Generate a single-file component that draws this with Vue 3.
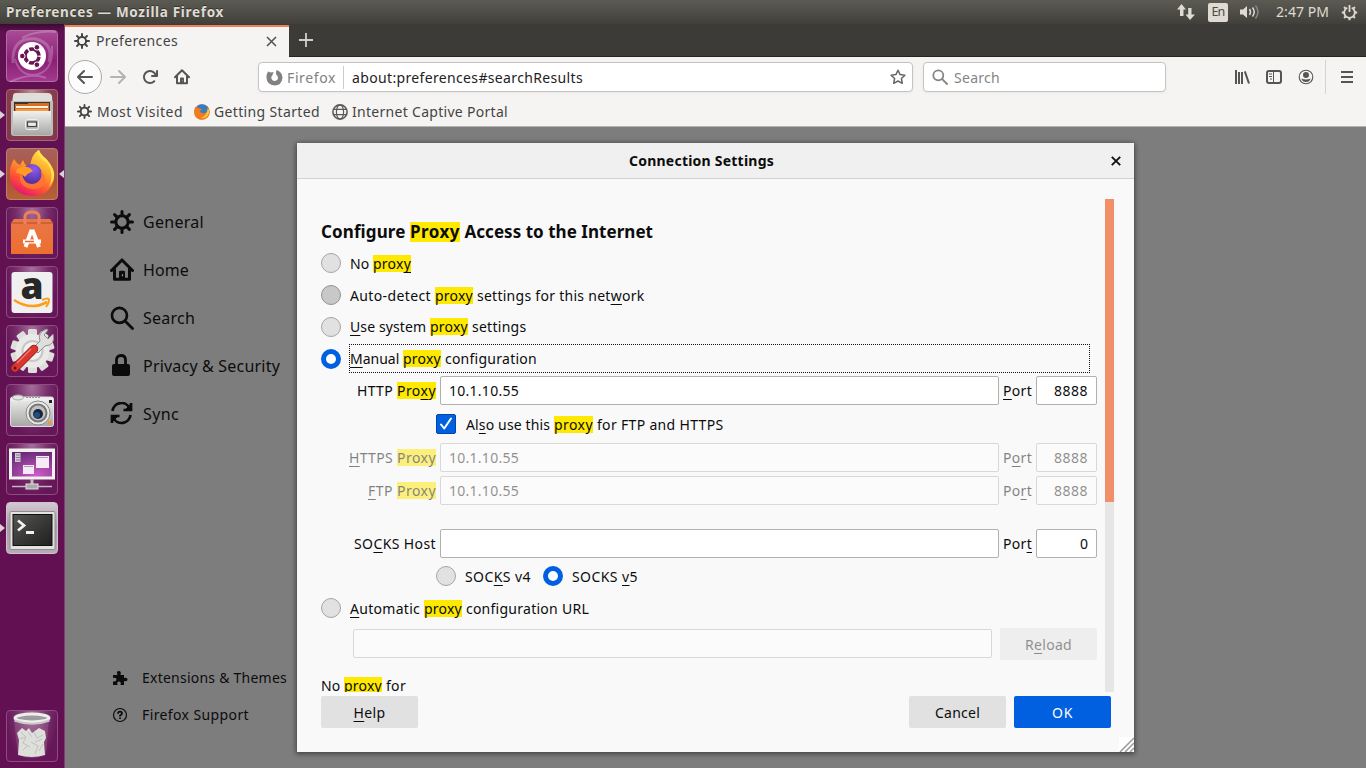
<script setup>
// v-fit: adjusts letter spacing so a label takes the given width in pixels
const vFit = {
  mounted(el, { value }) {
    const natural = el.getBoundingClientRect().width
    el.style.letterSpacing = (value - natural) / el.textContent.length + 'px'
  },
}
const spokes = [0, 45, 90, 135, 180, 225, 270, 315]
const teeth = [0, 36, 72, 108, 144, 180, 216, 252, 288, 324]
</script>

<template>
  <div class="screen">
    <svg class="defs" width="0" height="0">
      <defs>
        <symbol id="gear" viewBox="0 0 16 16">
          <circle cx="8" cy="8" r="4.1" fill="none" stroke="currentColor" stroke-width="2" />
          <path v-for="a in spokes" :key="a" d="M8 3.6V1" :transform="`rotate(${a} 8 8)`" stroke="currentColor" stroke-width="2" stroke-linecap="round" />
        </symbol>
        <symbol id="home" viewBox="0 0 16 16">
          <path d="M1 8.3 8 1.3l7 7M3 7v7.2h10V7" fill="none" stroke="currentColor" stroke-width="2" stroke-linecap="round" stroke-linejoin="round" />
          <path d="M6 14V9.400Q6 8.500 7 8.500H9Q10 8.500 10 9.400V14Z" fill="currentColor" /><path d="M8.300 10.800v1.400" stroke="#999" stroke-width=".8" />
        </symbol>
        <symbol id="lens" viewBox="0 0 16 16">
          <circle cx="6.3" cy="6.3" r="5" fill="none" stroke="currentColor" stroke-width="1.8" />
          <path d="m10.2 10.2 4.8 4.8" stroke="currentColor" stroke-width="1.9" stroke-linecap="round" />
        </symbol>
        <symbol id="arrow" viewBox="0 0 16 16">
          <path fill="currentColor" d="M15 7H3.414l4.293-4.293a1 1 0 0 0-1.414-1.414l-6 6a1 1 0 0 0 0 1.414l6 6a1 1 0 0 0 1.414-1.414L3.414 9H15a1 1 0 0 0 0-2z" />
        </symbol>
        <linearGradient id="metal" x1="0" y1="0" x2="0" y2="1"><stop offset="0" stop-color="#f1f1f0" /><stop offset="1" stop-color="#a6a6a5" /></linearGradient>
        <linearGradient id="flame" x1=".8" y1="0" x2=".3" y2="1"><stop offset="0" stop-color="#fff04a" /><stop offset=".4" stop-color="#ffa22a" /><stop offset=".75" stop-color="#ff4b37" /><stop offset="1" stop-color="#e3117a" /></linearGradient>
        <radialGradient id="globe" cx=".6" cy=".25" r=".8"><stop offset="0" stop-color="#8e5cf0" /><stop offset="1" stop-color="#4c2a9a" /></radialGradient>
        <linearGradient id="bag" x1="0" y1="0" x2="0" y2="1"><stop offset="0" stop-color="#e8764a" /><stop offset="1" stop-color="#ee6f2e" /></linearGradient>
        <radialGradient id="desk" cx=".6" cy=".9" r="1"><stop offset="0" stop-color="#d05cc8" /><stop offset="1" stop-color="#57246a" /></radialGradient>
        <linearGradient id="term" x1="0" y1="0" x2="1" y2="1"><stop offset="0" stop-color="#555652" /><stop offset="1" stop-color="#1e1f1e" /></linearGradient>
      </defs>
    </svg>

    <header class="panel">
      <b v-fit="218">Preferences — Mozilla Firefox</b>
      <div class="tray">
        <svg class="net" width="18" height="16" viewBox="0 0 18 16" fill="#dfdbd2"><path d="M0 5.5 4.5 0 9 5.5H6.5V12H3V5.5ZM8.5 10.5h2.7V4h3.3v6.5H18L13 16Z" /></svg>
        <span class="lang"><span v-fit="13">En</span></span>
        <svg class="vol" width="20" height="16" viewBox="0 0 20 16"><path d="M0 5.5h3L7 2v12l-4-3.500H0Z" fill="#dfdbd2" /><path d="M9.5 5Q11.500 8 9.500 11M12.500 3.500Q16 8 12.500 12.500" stroke="#dfdbd2" stroke-width="1.5" fill="none" /><path d="M15.500 1.500Q20.500 8 15.500 14.500" stroke="#88867e" stroke-width="1.600" fill="none" /></svg>
        <span class="clock" v-fit="53">2:47 PM</span>
        <svg class="power" width="17" height="17" viewBox="0 0 17 17" fill="none" stroke="#dfdbd2"><path d="M6.300 3.700A5.300 5.300 0 1 0 10.700 3.700" stroke-width="1.800" /><path d="M8.500 1v7" stroke-width="1.800" /><g stroke-width="2"><path v-for="a in spokes.slice(1)" :key="a" d="M8.500 3V.8" :transform="`rotate(${a} 8.500 8.500)`" /></g></svg>
      </div>
    </header>

    <div class="work">
      <aside class="launcher">
        <div class="tile dash"><svg viewBox="0 0 52 52">
          <g fill="none" stroke="#fff" opacity=".22"><path d="M7 33Q5 7 30 9Q48 14 43 32" stroke-width="3" /><path d="M46 16Q48 44 26 45Q13 44 9 29" stroke-width="2" /><path d="M4 52Q25 42 40 48M16 8Q31 0 50 2" stroke-width="2" /></g>
          <circle cx="26" cy="26" r="14" fill="#fff" />
          <circle cx="26" cy="26" r="7" fill="none" stroke="#6a1452" stroke-width="3.600" stroke-dasharray="13.160 1.500" stroke-dashoffset="-.75" />
          <g fill="#6a1452" stroke="#fff"><circle cx="16.300" cy="26" r="2.800" /><circle cx="30.900" cy="17.300" r="2.800" /><circle cx="30.900" cy="34.700" r="2.800" /></g>
        </svg></div>
        <div class="tile files"><i class="run"></i><svg viewBox="0 0 52 52">
          <path d="M7 7Q7 4 10 4H42Q45 4 46 7L47 21H5Z" fill="#dededd" /><path d="M5 12H47V44Q47 47 44 47H8Q5 47 5 44Z" fill="#bcbcbb" />
          <path d="M8 13H44V22H8Z" fill="#383634" /><path d="M9 15H22V14H43V22H9Z" fill="#d96e20" /><path d="M10 17H42V19H10Z" fill="#fff4df" /><path d="M10 20H42V22H10Z" fill="#f49b45" />
          <path d="M7 22H45V45Q45 46 43 46H9Q7 46 7 45Z" fill="url(#metal)" /><rect x="19.500" y="30.500" width="13" height="10" rx="2" fill="#bcbcba" stroke="#efefed" /><rect x="21.500" y="33" width="9" height="4.500" fill="#ececea" stroke="#454545" stroke-width="1.200" />
        </svg></div>
        <div class="tile fox"><i class="run"></i><i class="active"></i><svg viewBox="0 0 52 52">
          <path d="M8 11Q10 15 14 17L17 12Q19 18 24 20Q25 6 33 2Q33 8 41 12Q50 22 48 31C46 42 37 48 27 48C13 48 4 39 4 27Q3 19 8 11Z" fill="url(#flame)" />
          <path d="M31 3Q33 10 41 15Q49 26 43 39Q49 31 48 25Q45 14 37 8Q34 5 33 2Z" fill="#ffe34e" />
          <circle cx="26" cy="26" r="10" fill="url(#globe)" /><path d="M11 21Q18 17 24 20L27 23Q22 25 19 29Q15 25 10 25Z" fill="#ff9b24" /><path d="M16 26Q18 38 29 36Q37 33 35 23Q43 32 35 39Q26 44 18 38Q13 34 14 28Z" fill="#ff7431" />
        </svg></div>
        <div class="tile"><svg viewBox="0 0 52 52">
          <path d="M5 16 8 12H44L47 16V47H5Z" fill="url(#bag)" /><path d="M5 16H47" stroke="#b65024" /><path d="M19 17V9Q20 5 26 5T33 9V17" fill="none" stroke="#ed8159" stroke-width="3" />
          <g fill="none" stroke="#fff" stroke-width="4"><path d="M19.500 40 25 24.500H27L33 40" /><path d="M17 34.500H35" /></g><path d="M19 34.500H28" stroke="#e9652a" stroke-width="1.500" />
        </svg></div>
        <div class="tile"><svg viewBox="0 0 52 52">
          <rect x="5.500" y="6" width="41" height="41" rx="3" fill="#f1f0f0" />
          <text x="26" y="33" text-anchor="middle" class="amazon">a</text>
          <path d="M8 34Q25 45 41 36" fill="none" stroke="#ff9e16" stroke-width="2.600" /><path d="M36 34Q43 31 43 34T40 41" fill="none" stroke="#ff9e16" stroke-width="2" />
        </svg></div>
        <div class="tile"><svg viewBox="0 0 52 52">
          <g fill="#dededd"><rect v-for="a in teeth" :key="a" x="22" y="4" width="9" height="9" rx="1.500" :transform="`rotate(${a} 26.500 26)`" /></g><circle cx="26.500" cy="26" r="17" fill="#e9e9e8" /><circle cx="26.500" cy="26" r="11" fill="#c9c5c8" /><circle cx="26.500" cy="26" r="9" fill="#f1f1f0" />
          <path d="M27 23 34 16Q31 7 41 4L42 5 38 10 42 14 47 9Q50 20 39 21L32 28Z" fill="#dededd" stroke="#8f8f8d" /><path d="M9 43 28 24" stroke="#8f1515" stroke-width="8.500" stroke-linecap="round" /><path d="M9 43 28 24" stroke="#d93630" stroke-width="7" stroke-linecap="round" /><path d="M11 38 25 24" stroke="#ef8075" stroke-width="1.200" /><circle cx="9" cy="43" r="1.500" fill="#54151b" />
        </svg></div>
        <div class="tile"><svg viewBox="0 0 52 52">
          <rect x="4.500" y="13" width="43" height="29.500" rx="2" fill="url(#metal)" stroke="#ddd" /><path d="M5 15.500H47" stroke="#eee" stroke-width="3" /><ellipse cx="12" cy="13.500" rx="5.500" ry="2.500" fill="#e4e4e3" stroke="#aaa" /><path d="M20 13.500H35" stroke="#999" stroke-dasharray="2 1" />
          <circle cx="32" cy="29" r="12" fill="#e8e8e7" stroke="#888" /><circle cx="32" cy="29" r="8.500" fill="#bfc0bf" stroke="#767676" stroke-width="2" /><circle cx="32" cy="30" r="5" fill="#1a2636" /><circle cx="31" cy="31" r="3" fill="#244e89" />
          <rect x="43" y="16" width="3" height="3" fill="#222" /><rect x="42" y="37" width="3" height="3" fill="#f29a24" />
        </svg></div>
        <div class="tile"><svg viewBox="0 0 52 52">
          <rect x="4.500" y="7" width="43" height="28" fill="url(#desk)" stroke="#f1f1ef" stroke-width="3" /><path d="M6 8.500H46" stroke="#f5ecf5" stroke-width="1" /><rect x="9" y="10" width="5.500" height="9" fill="#d3c9d6" /><path d="M10 12H14M10 14.500H14M10 17H14" stroke="#8d7d94" />
          <rect x="30" y="13" width="13" height="12" fill="#f5eaf6" /><rect x="17" y="22" width="11" height="9" fill="#f5eaf6" /><path d="M31 14.500H42M18 23.500H27" stroke="#b399b8" /><path d="M26 36V42" stroke="#bdbdbb" stroke-width="3" /><path d="M6 43.500H46" stroke="#bdbdbb" stroke-width="1.500" /><rect x="20" y="41" width="12" height="5" fill="#aaa" stroke="#ddd" />
        </svg></div>
        <div class="tile terminal"><i class="run"></i><svg viewBox="0 0 52 52">
          <rect x="4" y="9.500" width="45" height="38" rx="1" fill="#e2e2e1" stroke="#8f8b8f" /><rect x="7" y="12.500" width="39" height="31" fill="url(#term)" stroke="#111" /><path d="m12 18.500 6 5-6 5M20 30.500H28" fill="none" stroke="#f1f1ef" stroke-width="2.800" />
        </svg></div>
        <div class="tile trash"><svg viewBox="0 0 52 52">
          <path d="M8 9 12 45Q26 51 40 45L43 9Z" fill="#d2c3cf" opacity=".18" /><path d="m11 23 5-5 4 3 3-3 3 5 7-5 6 3 1 7-2 4 1 13Q26 49 12 45l1-15Z" fill="#dedfdb" />
          <path d="m15 22 5 5-3 6 7 4M28 22l3 6 6-3M29 44l3-8-7-4M17 40l5-5m11 6 4-7M22 22l4 5M14 29l5-2m10 5 7-3" stroke="#bfc1bc" stroke-width="1" fill="none" />
          <ellipse cx="26" cy="8" rx="17" ry="4" fill="#a09aa0" stroke="#eeeeec" stroke-width="3" /><path d="M8.500 10.500Q26 17 43.500 10.500" stroke="#c9cac7" stroke-width="2" fill="none" />
        </svg></div>
      </aside>

      <section class="browser">
        <div class="tabs">
          <div class="tab">
            <svg class="ic" width="16" height="16"><use href="#gear" /></svg>
            <span class="tab-name" v-fit="82">Preferences</span>
            <svg class="close" width="11" height="11" viewBox="0 0 11 11"><path d="m1 1 9 9M10 1 1 10" stroke="#555" stroke-width="1.600" /></svg>
          </div>
          <svg class="plus" width="14" height="14" viewBox="0 0 14 14"><path d="M7 0V14M0 7H14" stroke="#d0cfc9" stroke-width="1.800" /></svg>
        </div>

        <nav class="nav">
          <span class="back"><svg width="16" height="16"><use href="#arrow" /></svg></span>
          <svg class="fwd" width="16" height="16"><use href="#arrow" /></svg>
          <svg class="reload" width="16" height="16" viewBox="0 0 16 16" fill="currentColor"><path d="M15 1a1 1 0 0 0-1 1v2.418A6.995 6.995 0 1 0 8 15a6.954 6.954 0 0 0 4.950-2.050 1 1 0 0 0-1.414-1.414A5.019 5.019 0 1 1 12.549 6H10a1 1 0 0 0 0 2h5a1 1 0 0 0 1-1V2a1 1 0 0 0-1-1z" /></svg>
          <svg class="house" width="16" height="16"><use href="#home" /></svg>
          <div class="url">
            <svg class="brand" width="17" height="17" viewBox="0 0 17 17"><path d="M2 2.500Q3.500 3 4.500 3.500Q6.500 2.800 8 3.500Q6 5 6.500 6.500Q5 7 5.300 9Q6 12 8.800 12Q12 11.500 12 8.500Q11.500 6 10 5.300Q10 3 10.500 1Q16.500 3 16.500 9Q15.500 16.500 8.500 16.500Q1 16 .5 9Q.2 5.500 2 2.500Z" fill="#818181" /></svg>
            <span class="ident" v-fit="49">Firefox</span>
            <span class="addr"><span v-fit="231">about:preferences#searchResults</span></span>
            <svg class="star" width="16" height="16" viewBox="0 0 16 16"><path d="m8 1.200 2.100 4.400 4.800.6-3.500 3.300.9 4.800L8 12l-4.300 2.300.9-4.800L1.100 6.200l4.800-.6Z" fill="none" stroke="#666" stroke-width="1.500" stroke-linejoin="round" /></svg>
          </div>
          <div class="find">
            <svg width="16" height="16"><use href="#lens" /></svg>
            <span v-fit="46">Search</span>
          </div>
          <div class="tools">
            <svg width="16" height="16" viewBox="0 0 16 16"><path d="M2 1V15M5 3V15M8 3V15M10.800 2.300 15 14.500" stroke="currentColor" stroke-width="2" /></svg>
            <svg width="16" height="16" viewBox="0 0 16 16"><rect x="1" y="2" width="14" height="12" rx="2" fill="none" stroke="currentColor" stroke-width="2" /><path d="M7.500 2V14M3 5H6M3 7.500H6M4 10H6" stroke="currentColor" stroke-width="1" /></svg>
            <svg width="16" height="16" viewBox="0 0 16 16"><circle cx="8" cy="8" r="6.800" fill="none" stroke="currentColor" stroke-width="1.100" /><circle cx="8" cy="6" r="3" fill="currentColor" /><path d="M3.300 9.500Q8 11.500 12.700 9.500Q11.500 13 8 13T3.300 9.500Z" fill="currentColor" /></svg>
          </div>
          <span class="menu"><svg width="12" height="12" viewBox="0 0 12 12"><path d="M0 1H12M0 6H12M0 11H12" stroke="currentColor" stroke-width="1.800" /></svg></span>
        </nav>

        <div class="marks">
          <svg class="ic" width="15" height="15"><use href="#gear" /></svg><span class="m1" v-fit="86">Most Visited</span>
          <svg width="16" height="16" viewBox="0 0 16 16"><circle cx="8" cy="8" r="7.800" fill="#ec6b1e" /><path d="M3 2Q9-2 14 3Q16 7 13 11L8 12Z" fill="#2f7fc5" /><path d="M1 3 4 4 8 5 6 7Q7 10 11 9Q14 8 13 3Q17 8 14 12Q11 16 6 15.500Q0 14 .3 7Z" fill="#f07b21" /><path d="M14 4Q16.500 9 13 12.500 10 15 7 14Q13 12 14 4Z" fill="#ffcb35" /></svg><span class="m2" v-fit="106">Getting Started</span>
          <svg width="16" height="16" viewBox="0 0 16 16" fill="none" stroke="#5a5a5a" stroke-width="1.200"><circle cx="8" cy="8" r="7.100" stroke-width="1.600" /><ellipse cx="8" cy="8" rx="3.600" ry="7" /><path d="M1.700 5.300H14.300M1.700 10.700H14.300" /></svg><span class="m3" v-fit="156">Internet Captive Portal</span>
        </div>

        <main class="page">
          <div class="side">
            <div class="cat"><svg width="24" height="24"><use href="#gear" /></svg><span v-fit="61">General</span></div>
            <div class="cat"><svg width="24" height="24"><use href="#home" /></svg><span v-fit="46">Home</span></div>
            <div class="cat"><svg width="24" height="24"><use href="#lens" /></svg><span v-fit="52">Search</span></div>
            <div class="cat"><svg width="24" height="24" viewBox="0 0 24 24"><rect x="2" y="10" width="18" height="12" rx="2" fill="#0b0b0b" /><path d="M6.500 11V6Q6.500 1.500 11 1.500T15.500 6V11" fill="none" stroke="#0b0b0b" stroke-width="2.800" /></svg><span v-fit="137">Privacy &amp; Security</span></div>
            <div class="cat"><svg width="24" height="24" viewBox="0 0 24 24" fill="none" stroke="#0b0b0b" stroke-width="2.700"><path d="M2.500 9A9 9 0 0 1 19.500 6M21 1V8H13.500M20.500 13A9 9 0 0 1 3.500 16M2 21V14H9.500" /><path d="m20 3-4 4h4ZM3 19l4-4H3Z" fill="#0b0b0b" stroke-width="1" /></svg><span v-fit="36">Sync</span></div>
            <div class="sub first"><svg width="16" height="16" viewBox="0 0 16 16"><path d="M1 5H5.500Q4 1 6.800 1T8.500 5H12V8Q15.500 7 15.500 9.500T12 11V15H8.500Q9.500 11.500 7 11.500T5.500 15H1V11.500Q4.500 12 4.500 9.500T1 8Z" fill="#0b0b0b" /></svg><span v-fit="145">Extensions &amp; Themes</span></div>
            <div class="sub"><svg width="16" height="16" viewBox="0 0 16 16" fill="none" stroke="#0b0b0b"><circle cx="8" cy="8" r="6.500" stroke-width="1.200" /><path d="M6 6.700Q6 4.600 8 4.600T10 6.500Q10 7.500 8 8.500V9.500M8 10.500V12" stroke-width="1.700" /></svg><span v-fit="107">Firefox Support</span></div>
          </div>

          <div class="dialog">
            <div class="title"><b v-fit="145">Connection Settings</b><svg class="x" width="10" height="10" viewBox="0 0 10 10"><path d="m.8.8 8.400 8.400M9.200.8.8 9.200" stroke="#111" stroke-width="1.900" /></svg></div>
            <div class="body">
              <div class="scroll">
                <div class="form">
                  <h2><span v-fit="89">Configure </span><mark v-fit="50">Proxy</mark><span v-fit="193"> Access to the Internet</span></h2>
                  <div class="row"><i class="radio"></i><label><span v-fit="23">No </span><mark v-fit="38">prox<u>y</u></mark></label></div>
                  <div class="row"><i class="radio hover"></i><label><span v-fit="85">Auto-detect </span><mark v-fit="38">proxy</mark><span v-fit="171.500"> settings for this net<u>w</u>ork</span></label></div>
                  <div class="row third"><i class="radio"></i><label><span v-fit="80"><u>U</u>se system </span><mark v-fit="38">proxy</mark><span v-fit="58.500"> settings</span></label></div>
                  <div class="row"><i class="radio on"></i><label class="focus"><span v-fit="53"><u>M</u>anual </span><mark v-fit="38">proxy</mark><span v-fit="96"> configuration</span></label></div>
                  <div class="field http"><label><span v-fit="40">HTTP </span><mark v-fit="39">Pro<u>x</u>y</mark></label><div class="input"><span v-fit="70">10.1.10.55</span></div><span class="port"><span v-fit="29"><u>P</u>ort</span></span><div class="input num"><span v-fit="34">8888</span></div></div>
                  <div class="check"><i><svg width="20" height="20" viewBox="0 0 20 20"><path d="m5 10.500 3.200 4L15 4.500" fill="none" stroke="#fff" stroke-width="2" stroke-linecap="round" stroke-linejoin="round" /></svg></i><label><span v-fit="88">Al<u>s</u>o use this </span><mark v-fit="39">proxy</mark><span v-fit="130.500"> for FTP and HTTPS</span></label></div>
                  <div class="field off"><label><span v-fit="48"><u>H</u>TTPS </span><mark v-fit="39">Proxy</mark></label><div class="input"><span v-fit="70">10.1.10.55</span></div><span class="port"><span v-fit="29">P<u>o</u>rt</span></span><div class="input num"><span v-fit="34">8888</span></div></div>
                  <div class="field off ftp"><label><span v-fit="29"><u>F</u>TP </span><mark v-fit="39">Proxy</mark></label><div class="input"><span v-fit="70">10.1.10.55</span></div><span class="port"><span v-fit="29">Po<u>r</u>t</span></span><div class="input num"><span v-fit="34">8888</span></div></div>
                  <div class="field socks"><label><span v-fit="82">SO<u>C</u>KS Host</span></label><div class="input"></div><span class="port"><span v-fit="29">Por<u>t</u></span></span><div class="input num"><span v-fit="8">0</span></div></div>
                  <div class="versions"><i class="radio"></i><label><span v-fit="66">SOC<u>K</u>S v4</span></label><i class="radio on"></i><label><span v-fit="66">SOCKS <u>v</u>5</span></label></div>
                  <div class="row auto"><i class="radio"></i><label><span v-fit="74"><u>A</u>utomatic </span><mark v-fit="38">proxy</mark><span v-fit="127"> configuration URL</span></label></div>
                  <div class="pac"><div class="input"></div><button><span v-fit="47">R<u>e</u>load</span></button></div>
                  <div class="noproxy"><span v-fit="23">No </span><mark v-fit="38">proxy</mark><span v-fit="24"> for</span></div>
                </div>
                <div class="bar"><div class="thumb"></div></div>
              </div>
              <footer class="actions">
                <button><span v-fit="32"><u>H</u>elp</span></button>
                <button class="cancel"><span v-fit="45">Cancel</span></button>
                <button class="ok"><span v-fit="21">OK</span></button>
              </footer>
            </div>
            <svg class="grip" width="15" height="15" viewBox="0 0 15 15"><rect width="15" height="15" fill="#fff" /><path d="M1 15 15 1M6 15 15 6M11 15 15 11" stroke="#999" stroke-width="1.500" /></svg>
          </div>
        </main>
      </section>
    </div>
  </div>
</template>

<style>
body { overflow: hidden; }
</style>

<style scoped>
* { box-sizing: border-box; }
.screen { width: 1366px; height: 768px; display: flex; flex-direction: column; overflow: hidden; font: 14px/20px "Noto Sans", "Open Sans", sans-serif; color: #0c0c0d; white-space: pre; }
svg { display: block; flex: none; }
.defs { position: absolute; }
.screen span, .screen b, .screen mark { flex: none; }
.panel { height: 24px; flex: none; display: flex; align-items: center; padding: 0 8px 0 6px; background: linear-gradient(#5c5b53, #403f3a); color: #dfdbd2; }
.panel b { font-size: 13.500px; text-shadow: 0 -1px #33322e; }
.tray { margin-left: auto; display: flex; align-items: center; }
.lang { width: 20px; height: 19px; margin: 0 12px 0 13px; border-radius: 2px; background: #dfdbd2; color: #4b4a44; display: flex; justify-content: center; align-items: center; font-size: 12.500px; }
.clock { margin: 0 12px 0 16px; }
.work { flex: 1; min-height: 0; display: flex; }
.launcher { width: 65px; flex: none; border-right: 1px solid #873c7a; background: linear-gradient(#3d0a34, #611052 8px, #621052); display: flex; flex-direction: column; gap: 7px; padding: 6px 0 6px 6px; }
.tile { position: relative; width: 52px; height: 52px; flex: none; border-radius: 4px; border: 1px solid #8a4f80; background: radial-gradient(ellipse at 50% 0, #a5709b, #782e6b 45%, #661659 75%); }
.tile > svg { width: 52px; height: 52px; margin: -1px; }
.dash { background: linear-gradient(#a84c96, #8b1f77 60%, #a33a8f); border-color: #b36ba6; }
.files { background: radial-gradient(ellipse at 50% 0, #c2918e, #8a3e4c 50%, #84354b); border-color: #a06a75; }
.fox { background: linear-gradient(#a8615c, #ad5337 60%, #b96036); border-color: #c08070; }
.terminal { background: linear-gradient(#d3c8d2, #aa9ba9 45%, #b8aab7); border-color: #cfc4ce; }
.trash { margin-top: auto; }
.amazon { font: 800 37px "Open Sans", sans-serif; fill: #272727; }
.run { position: absolute; left: -7px; top: 21px; border: 4px solid transparent; border-left: 5px solid #dad1d9; border-right: 0; }
.active { position: absolute; right: -7px; top: 21px; border: 4px solid transparent; border-right: 5px solid #dad1d9; border-left: 0; }
.browser { flex: 1; display: flex; flex-direction: column; }
.tabs { height: 33px; flex: none; display: flex; align-items: center; background: #3c3b37; border-bottom: 1px solid #252421; }
.tab { width: 224px; height: 33px; align-self: flex-start; border-top: 1px solid #3c3b37; box-shadow: inset 0 2px #f0805a; background: #f5f4f2; display: flex; align-items: center; padding: 0 12px 0 9px; color: #444; }
.tab-name { margin-left: 6px; }
.close { margin-left: auto; }
.plus { margin-left: 10px; }
.nav { height: 40px; flex: none; background: #f5f4f2; display: flex; align-items: center; padding-left: 3px; color: #555; }
.back { width: 34px; height: 34px; border: 1px solid #aaa9a7; border-radius: 50%; background: #fcfcfc; display: flex; align-items: center; justify-content: center; }
.fwd { margin-left: 8px; color: #b4b3b1; transform: scaleX(-1); }
.reload { margin-left: 16px; }
.house { margin-left: 16px; }
.url, .find { height: 30px; border: 1px solid #c4c3c1; border-radius: 4px; background: #fff; box-shadow: 0 1px 3px #0000000d; display: flex; align-items: center; }
.url { width: 655px; margin-left: 68px; padding: 0 6px 0 7px; }
.ident { margin-left: 4px; padding-top: 1px; color: #818181; }
.addr { margin-left: 7px; color: #222; padding: 1px 0 0 8px; border-left: 1px solid #ccc; line-height: 22px; }
.star { margin-left: auto; }
.find { width: 243px; margin-left: 10px; padding-left: 8px; color: #858585; }
.find span { margin-left: 6px; padding-top: 1px; }
.tools { display: flex; gap: 16px; margin-left: 68px; }
.menu { margin-left: 11px; height: 34px; width: 40px; border-left: 1px solid #d4d3d1; display: flex; align-items: center; padding-left: 15px; }
.marks { height: 30px; flex: none; background: #f5f4f2; border-bottom: 1px solid #b5b4b2; display: flex; align-items: center; padding-left: 12px; color: #444; }
.m1 { margin: 0 11px 0 5px; }
.m2 { margin: 0 12px 0 4px; }
.m3 { margin-left: 4px; }
.page { position: relative; flex: 1; min-height: 0; background: #7d7d7d; overflow: hidden; }
.side { width: 232px; padding: 71px 0 0 45px; font-size: 16px; }
.cat { height: 48px; display: flex; align-items: center; gap: 9px; }
.cat svg { width: 24px; height: 24px; }
.sub { height: 37px; display: flex; align-items: center; padding-left: 2px; gap: 14px; font-size: 14px; }
.first { margin-top: 221px; }
.dialog { position: absolute; left: 232px; top: 16px; width: 837px; height: 609px; background: #f9f9f9; box-shadow: 0 1px 5px 1px #0007; border-radius: 2px 2px 0 0; display: flex; flex-direction: column; }
.title { height: 36px; flex: none; background: #f0f0f0; border-bottom: 1px solid #d2d2d2; display: flex; align-items: center; padding: 0 13px 0 332px; }
.x { margin-left: auto; }
.body { flex: 1; display: flex; flex-direction: column; padding: 20px 20px 0 24px; }
.scroll { height: 493px; flex: none; display: flex; overflow: hidden; }
.form { width: 784px; flex: none; }
.bar { width: 9px; background: #e6e6e6; }
.thumb { height: 303px; background: #f08f68; }
mark { background: #ffe900; color: inherit; }
u { text-decoration: underline 1px; text-underline-offset: 3px; text-decoration-skip-ink: none; }
mark { display: inline-block; line-height: 17px; }
h2 { margin: 0; padding-top: 21px; height: 48px; font-size: 17px; line-height: 24px; }
h2 mark { line-height: 20px; }
.row { height: 32px; display: flex; align-items: center; gap: 9px; }
.row label { padding-top: 2px; }
.row.third label { padding-top: 0; }
.radio { width: 20px; height: 20px; flex: none; border-radius: 50%; background: #e1e1e1; border: 1px solid #a5a5a5; }
.radio.hover { background: #c8c8c8; border-color: #929292; }
.radio.on { background: #fff; border: 5px solid #0060df; }
.row .focus { width: 741px; height: 29px; margin: -1px 0 1px -1px; padding: 4px 0 0 1px; line-height: 22px; outline: 1px dotted #111; outline-offset: -1px; }
.field { height: 29px; display: flex; align-items: center; }
.http { margin-top: 1px; }
.field > label { width: 115px; margin-right: 4px; text-align: right; }
.input { width: 559px; height: 29px; border: 1px solid #b1b1b1; border-radius: 2px; background: #fff; padding: 4px 8px 0; line-height: 20px; }
.port { width: 29px; margin: 0 4px; }
.input.num { width: 61px; text-align: right; }
.check { height: 38px; display: flex; align-items: center; padding-left: 115px; gap: 10px; }
.check i { width: 20px; height: 20px; background: #0060df; border: 1px solid #0048a8; border-radius: 2px; }
.check i svg { margin: -1px; }
.check label { padding-top: 1px; }
.off > * { opacity: .5; }
.off > .input { opacity: .45; }
.ftp { margin-top: 4px; }
.socks { margin-top: 24px; }
.versions { height: 36px; display: flex; align-items: center; padding-left: 115px; gap: 9px; }
.versions label { margin-right: 3px; padding-top: 1px; }
.auto { height: 28px; }
.pac { height: 32px; margin-top: 6px; padding-left: 32px; display: flex; align-items: center; }
.pac .input { width: 639px; margin-bottom: 1px; opacity: .45; }
button { width: 97px; height: 32px; padding: 1px 0 0; border: 0; border-radius: 2px; background: #e1e1e1; font: inherit; color: inherit; }
.pac button { margin-left: 8px; opacity: .45; }
.noproxy { height: 20px; margin-top: 16px; }
.actions { display: flex; margin-top: 4px; }
.cancel { margin-left: 491px; }
.ok { margin-left: 8px; background: #0060df; color: #fff; }
.grip { position: absolute; right: 0; bottom: 0; }
</style>
